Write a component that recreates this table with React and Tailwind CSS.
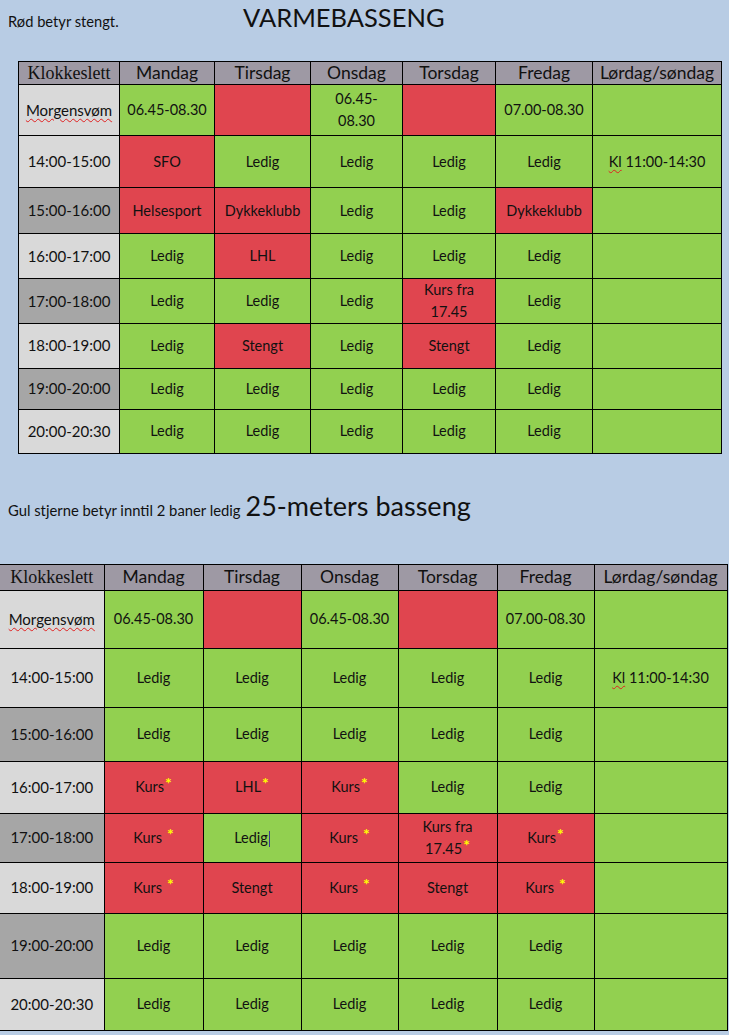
import React from "react";

const FONT = { fontFamily: "Lato, 'Noto Sans', sans-serif" };

// cell shorthand: [colour, text, star]
// star: "" none, "t" tight, "s" with a space
const topRows = [
  {
    time: "Morgensvøm",
    spell: true,
    shade: "l",
    cells: [
      ["g", "06.45-08.30"],
      ["r", ""],
      ["g", "06.45-|08.30"],
      ["r", ""],
      ["g", "07.00-08.30"],
      ["g", ""],
    ],
  },
  {
    time: "14:00-15:00",
    shade: "l",
    cells: [
      ["r", "SFO"],
      ["g", "Ledig"],
      ["g", "Ledig"],
      ["g", "Ledig"],
      ["g", "Ledig"],
      ["g", "KL"],
    ],
  },
  {
    time: "15:00-16:00",
    shade: "d",
    cells: [
      ["r", "Helsesport"],
      ["r", "Dykkeklubb"],
      ["g", "Ledig"],
      ["g", "Ledig"],
      ["r", "Dykkeklubb"],
      ["g", ""],
    ],
  },
  {
    time: "16:00-17:00",
    shade: "l",
    cells: [
      ["g", "Ledig"],
      ["r", "LHL"],
      ["g", "Ledig"],
      ["g", "Ledig"],
      ["g", "Ledig"],
      ["g", ""],
    ],
  },
  {
    time: "17:00-18:00",
    shade: "d",
    cells: [
      ["g", "Ledig"],
      ["g", "Ledig"],
      ["g", "Ledig"],
      ["r", "Kurs fra|17.45"],
      ["g", "Ledig"],
      ["g", ""],
    ],
  },
  {
    time: "18:00-19:00",
    shade: "l",
    cells: [
      ["g", "Ledig"],
      ["r", "Stengt"],
      ["g", "Ledig"],
      ["r", "Stengt"],
      ["g", "Ledig"],
      ["g", ""],
    ],
  },
  {
    time: "19:00-20:00",
    shade: "d",
    cells: [
      ["g", "Ledig"],
      ["g", "Ledig"],
      ["g", "Ledig"],
      ["g", "Ledig"],
      ["g", "Ledig"],
      ["g", ""],
    ],
  },
  {
    time: "20:00-20:30",
    shade: "l",
    cells: [
      ["g", "Ledig"],
      ["g", "Ledig"],
      ["g", "Ledig"],
      ["g", "Ledig"],
      ["g", "Ledig"],
      ["g", ""],
    ],
  },
];

const bottomRows = [
  {
    time: "Morgensvøm",
    spell: true,
    shade: "l",
    cells: [
      ["g", "06.45-08.30"],
      ["r", ""],
      ["g", "06.45-08.30"],
      ["r", ""],
      ["g", "07.00-08.30"],
      ["g", ""],
    ],
  },
  {
    time: "14:00-15:00",
    shade: "l",
    cells: [
      ["g", "Ledig"],
      ["g", "Ledig"],
      ["g", "Ledig"],
      ["g", "Ledig"],
      ["g", "Ledig"],
      ["g", "KL"],
    ],
  },
  {
    time: "15:00-16:00",
    shade: "d",
    cells: [
      ["g", "Ledig"],
      ["g", "Ledig"],
      ["g", "Ledig"],
      ["g", "Ledig"],
      ["g", "Ledig"],
      ["g", ""],
    ],
  },
  {
    time: "16:00-17:00",
    shade: "l",
    cells: [
      ["r", "Kurs", "t"],
      ["r", "LHL", "t"],
      ["r", "Kurs", "t"],
      ["g", "Ledig"],
      ["g", "Ledig"],
      ["g", ""],
    ],
  },
  {
    time: "17:00-18:00",
    shade: "d",
    cells: [
      ["r", "Kurs", "s"],
      ["g", "CURSOR"],
      ["r", "Kurs", "s"],
      ["r", "Kurs fra|17.45", "t"],
      ["r", "Kurs", "t"],
      ["g", ""],
    ],
  },
  {
    time: "18:00-19:00",
    shade: "l",
    cells: [
      ["r", "Kurs", "s"],
      ["r", "Stengt"],
      ["r", "Kurs", "s"],
      ["r", "Stengt"],
      ["r", "Kurs", "s"],
      ["g", ""],
    ],
  },
  {
    time: "19:00-20:00",
    shade: "d",
    cells: [
      ["g", "Ledig"],
      ["g", "Ledig"],
      ["g", "Ledig"],
      ["g", "Ledig"],
      ["g", "Ledig"],
      ["g", ""],
    ],
  },
  {
    time: "20:00-20:30",
    shade: "l",
    cells: [
      ["g", "Ledig"],
      ["g", "Ledig"],
      ["g", "Ledig"],
      ["g", "Ledig"],
      ["g", "Ledig"],
      ["g", ""],
    ],
  },
];

const days = ["Mandag", "Tirsdag", "Onsdag", "Torsdag", "Fredag", "Lørdag/søndag"];

function Star({ space }) {
  return (
    <span
      className={`relative -top-[3px] text-[16px] leading-none font-bold text-[#ffff00] ${
        space ? "ml-[5px]" : "ml-[1px]"
      }`}
    >
      *
    </span>
  );
}

function CellText({ text, star }) {
  if (text === "KL") {
    return (
      <span>
        <span className="underline decoration-wavy decoration-[#e02020] decoration-1 underline-offset-2">
          Kl
        </span>{" "}
        11:00-14:30
      </span>
    );
  }
  if (text === "CURSOR") {
    return (
      <span>
        Ledig
        <span className="inline-block w-px h-[16px] bg-[#3b3b8f] align-middle ml-[1px]" />
      </span>
    );
  }
  const lines = text.split("|");
  return (
    <span className="leading-[19px]">
      {lines.map((l, i) => (
        <span key={i}>
          {i > 0 && <br />}
          {l}
          {i === lines.length - 1 && star && <Star space={star === "s"} />}
        </span>
      ))}
    </span>
  );
}

function Schedule({ rows, cols, heights, headH, width, noLeft }) {
  return (
    <table
      className="table-fixed border-collapse text-[#111]"
      style={{ width }}
    >
      <colgroup>
        {cols.map((w, i) => (
          <col key={i} style={{ width: w }} />
        ))}
      </colgroup>
      <thead>
        <tr style={{ height: headH }}>
          <th
            className={`border border-black bg-[#9e99a4] font-normal text-[18px] leading-none p-0 text-[#111] ${
              noLeft ? "border-l-0" : ""
            }`}
            style={{ fontFamily: "'Liberation Serif', serif" }}
          >
            Klokkeslett
          </th>
          {days.map((d) => (
            <th
              key={d}
              className="border border-black bg-[#9e99a4] font-normal text-[17.5px] leading-none p-0 whitespace-nowrap"
              style={FONT}
            >
              {d}
            </th>
          ))}
        </tr>
      </thead>
      <tbody>
        {rows.map((row, ri) => (
          <tr key={ri} style={{ height: heights[ri] }}>
            <td
              className={`border border-black p-0 text-center text-[15px] ${
                row.shade === "d" ? "bg-[#a6a6a6]" : "bg-[#d9d9d9]"
              } ${noLeft ? "border-l-0" : ""}`}
              style={FONT}
            >
              {row.spell ? (
                <span className="underline decoration-wavy decoration-[#e02020] decoration-1 underline-offset-2">
                  {row.time}
                </span>
              ) : (
                row.time
              )}
            </td>
            {row.cells.map(([c, t, s], ci) => (
              <td
                key={ci}
                className={`border border-black p-0 text-center text-[14.5px] ${
                  c === "r" ? "bg-[#e0454f]" : "bg-[#92d050]"
                }`}
                style={FONT}
              >
                <CellText text={t} star={s} />
              </td>
            ))}
          </tr>
        ))}
      </tbody>
    </table>
  );
}

export default function App() {
  return (
    <div className="w-[729px] h-[1035px] overflow-hidden bg-[#b8cce4]" style={FONT}>
      {/* Varmebasseng */}
      <div className="h-[61px] pt-[5px] pl-[8px] flex items-baseline text-[#111]">
        <span className="w-[235px] text-[14.7px]">Rød betyr stengt.</span>
        <span className="text-[25.5px] leading-none">VARMEBASSENG</span>
      </div>
      <div className="pl-[18px]">
        <Schedule
          rows={topRows}
          cols={[101, 95, 96, 92, 93, 97, 129]}
          heights={[51, 52, 46, 45, 44, 45, 41, 44]}
          headH={23}
          width={703}
        />
      </div>

      {/* 25-meters basseng */}
      <div className="h-[110px] pt-[38px] pl-[8px] flex items-baseline text-[#111]">
        <span className="text-[14.8px] mr-[5px]">Gul stjerne betyr inntil 2 baner ledig</span>
        <span className="text-[27px] leading-none">25-meters basseng</span>
      </div>
      <Schedule
        rows={bottomRows}
        cols={[104, 99, 98, 97, 99, 97, 133]}
        heights={[58, 59, 54, 52, 49, 51, 65, 52]}
        headH={26}
        width={727}
        noLeft
      />
    </div>
  );
}
